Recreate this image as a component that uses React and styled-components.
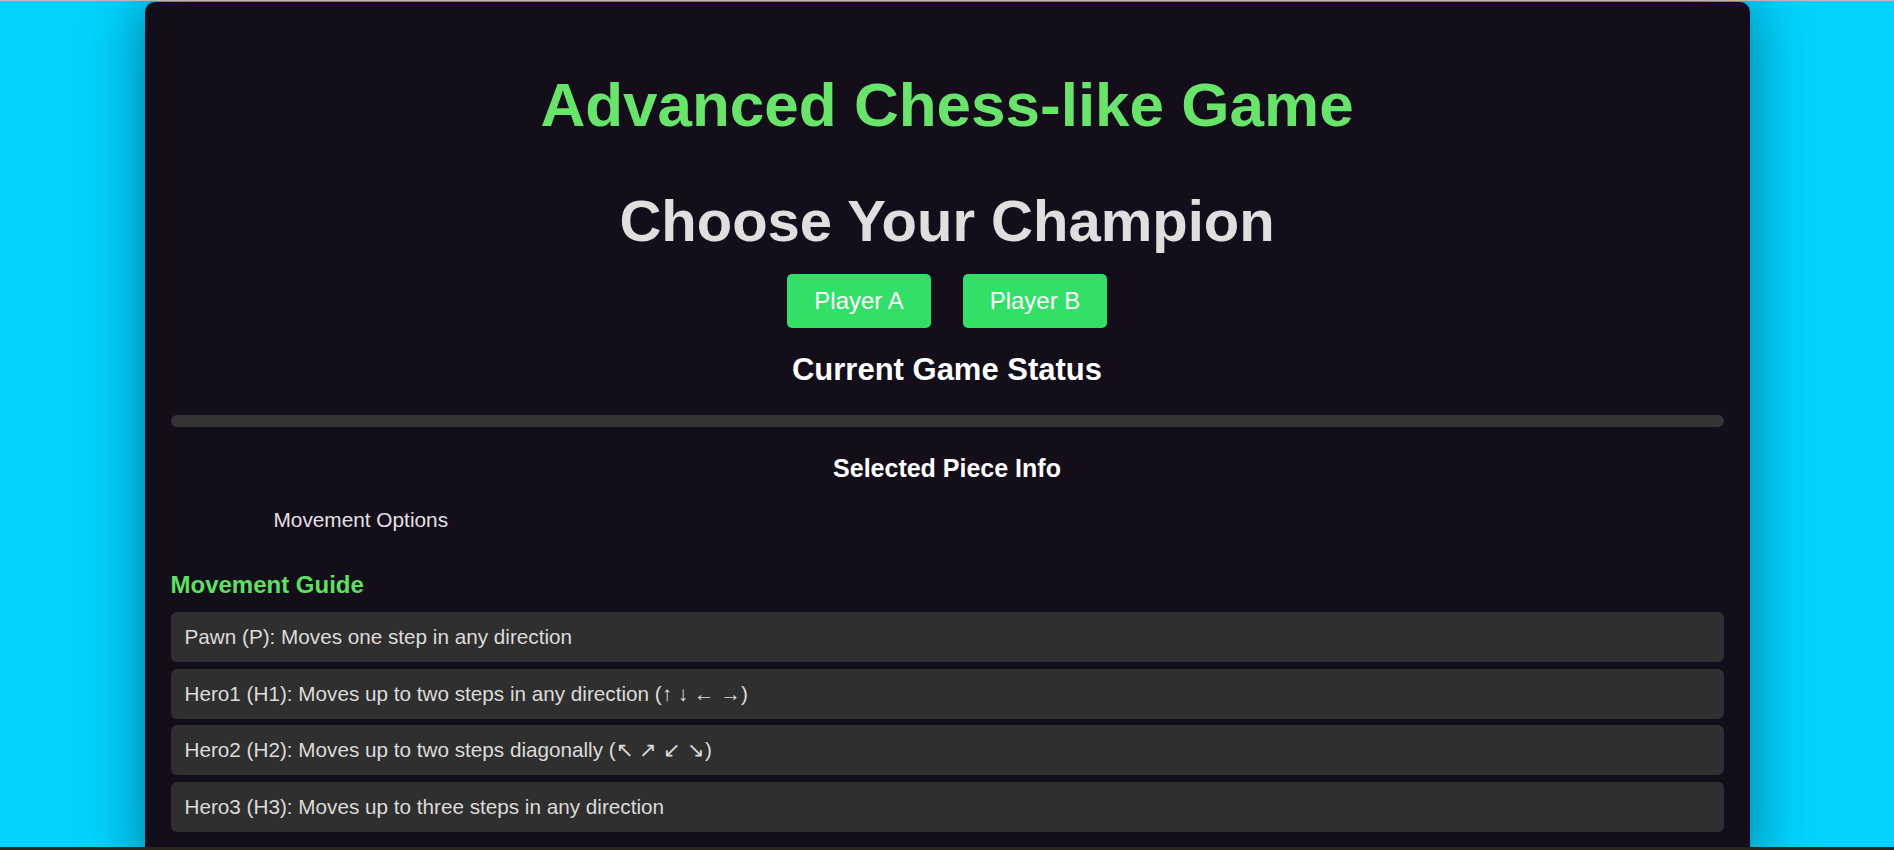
import React, { useState } from "react";
import styled, { createGlobalStyle } from "styled-components";

const pieces = [
  { id: "P", text: "Pawn (P): Moves one step in any direction" },
  { id: "H1", text: "Hero1 (H1): Moves up to two steps in any direction (↑ ↓ ← →)" },
  { id: "H2", text: "Hero2 (H2): Moves up to two steps diagonally (↖ ↗ ↙ ↘)" },
  { id: "H3", text: "Hero3 (H3): Moves up to three steps in any direction" },
];

const players = ["Player A", "Player B"];

const App = () => {
  const [player, setPlayer] = useState(null);

  return (
    <>
      <GlobalStyle />
      <Page>
        <Card>
          <Title>Advanced Chess-like Game</Title>
          <Subtitle>Choose Your Champion</Subtitle>
          <ButtonRow>
            {players.map((name) => (
              <PlayerButton
                key={name}
                $active={player === name}
                onClick={() => setPlayer(name)}
              >
                {name}
              </PlayerButton>
            ))}
          </ButtonRow>
          <StatusHeading>Current Game Status</StatusHeading>
          <StatusBar />
          <InfoHeading>Selected Piece Info</InfoHeading>
          <MoveOptions>Movement Options</MoveOptions>
          <GuideHeading>Movement Guide</GuideHeading>
          <GuideList>
            {pieces.map((piece) => (
              <GuideItem key={piece.id}>{piece.text}</GuideItem>
            ))}
          </GuideList>
        </Card>
      </Page>
      <WindowEdge />
    </>
  );
};

export default App;

const GlobalStyle = createGlobalStyle`
  html, body {
    margin: 0;
    padding: 0;
    height: 100%;
    overflow: hidden;
  }
  body {
    background: #00d3ff;
    border-top: 1px solid #b8b8b8;
    font-family: "Liberation Sans", Arial, sans-serif;
  }
`;

const Page = styled.div`
  display: flex;
  justify-content: center;
  padding-top: 1px;
`;

const Card = styled.main`
  width: 1605px;
  box-sizing: border-box;
  padding: 0 26px 40px;
  background: #130e1a;
  border-radius: 10px;
  box-shadow: 0 0 60px rgba(0, 0, 0, 0.45);
  display: flex;
  flex-direction: column;
`;

const Title = styled.h1`
  margin: 67px 0 0;
  text-align: center;
  font-size: 62px;
  font-weight: bold;
  line-height: normal;
  color: #68e46a;
`;

const Subtitle = styled.h2`
  margin: 47px 0 0;
  text-align: center;
  font-size: 58px;
  font-weight: bold;
  line-height: normal;
  color: #e2dede;
`;

const ButtonRow = styled.div`
  display: flex;
  justify-content: center;
  gap: 32px;
  margin-top: 20px;
`;

const PlayerButton = styled.button`
  width: 144px;
  height: 54px;
  padding: 0;
  border: none;
  border-radius: 5px;
  background: ${(p) => (p.$active ? "#2bc95a" : "#33e067")};
  color: #ffffff;
  font-family: inherit;
  font-size: 24px;
  cursor: pointer;

  &:hover {
    background: #2fd560;
  }
`;

const StatusHeading = styled.h3`
  margin: 24px 0 0;
  text-align: center;
  font-size: 31px;
  font-weight: bold;
  line-height: normal;
  color: #ffffff;
`;

const StatusBar = styled.div`
  margin-top: 27px;
  height: 12px;
  border-radius: 6px;
  background: #353535;
`;

const InfoHeading = styled.h4`
  margin: 27px 0 0;
  text-align: center;
  font-size: 25px;
  font-weight: bold;
  line-height: normal;
  color: #ffffff;
`;

const MoveOptions = styled.div`
  margin-top: 25px;
  padding-left: 103px;
  font-size: 20.8px;
  line-height: normal;
  color: #e4e0e4;
`;

const GuideHeading = styled.h4`
  margin: 39px 0 0;
  font-size: 24px;
  font-weight: bold;
  line-height: normal;
  color: #5fe060;
`;

const GuideList = styled.ul`
  list-style: none;
  margin: 13px 0 0;
  padding: 0;
  display: flex;
  flex-direction: column;
  gap: 6.5px;
`;

const GuideItem = styled.li`
  height: 50px;
  display: flex;
  align-items: center;
  padding: 0 14px;
  border-radius: 6px;
  background: #2f2f2f;
  font-size: 20.7px;
  color: #dedada;
`;

const WindowEdge = styled.div`
  position: fixed;
  left: 0;
  right: 0;
  bottom: 0;
  height: 3px;
  background: #2d241b;
`;
